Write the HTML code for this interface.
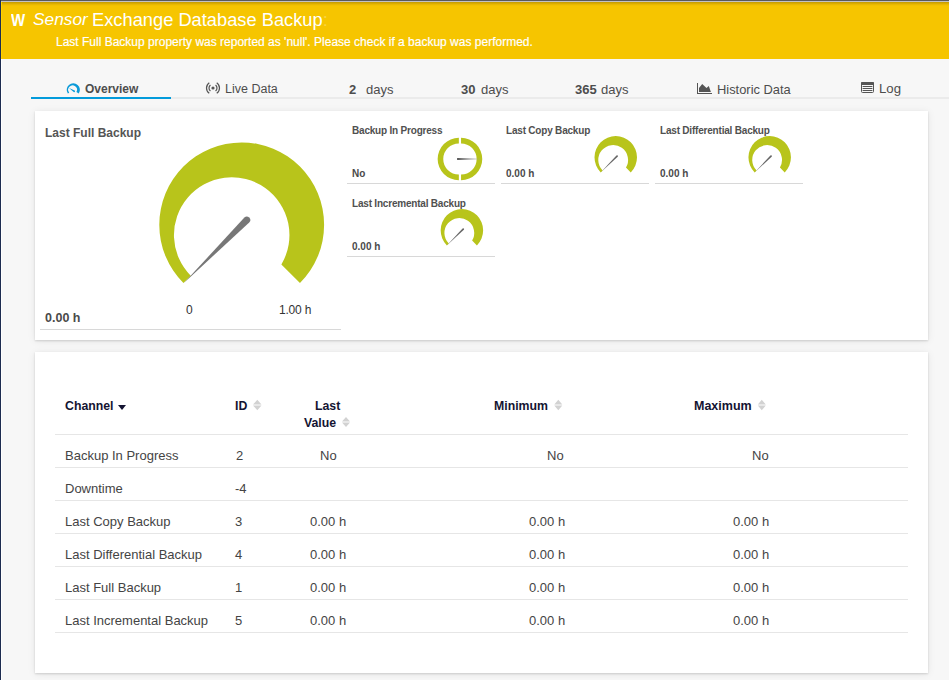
<!DOCTYPE html>
<html><head><meta charset="utf-8">
<style>
html,body{margin:0;padding:0;}
body{width:949px;height:680px;overflow:hidden;position:relative;background:#f7f7f7;font-family:"Liberation Sans",sans-serif;}
.a{position:absolute;white-space:nowrap;}
#topline{left:0;top:0;width:949px;height:1px;background:#5a5a5a;}
#topline2{left:1px;top:1px;width:948px;height:1px;background:#c2c2c4;}
#leftline{left:0;top:0;width:1px;height:680px;background:#1d2c50;}
#leftw{left:1px;top:59px;width:1px;height:621px;background:#fff;}
#hdr{left:1px;top:2px;width:948px;height:57px;background:#f6c500;}
#hdr:before{content:"";position:absolute;left:0;top:0;right:0;height:4px;background:linear-gradient(#c29a00,#d9ab00 35%,#ecbc00 70%,#f6c500);}
#hdrl{left:1px;top:2px;width:1px;height:57px;background:#ffd000;}
.wt{color:#fff;}
.tab{color:#4d4d4d;font-size:13px;}
.card{position:absolute;background:#fff;box-shadow:0 1px 2px rgba(0,0,0,.14),0 1px 8px rgba(0,0,0,.08);}
.gt{font-weight:bold;font-size:10px;color:#505050;letter-spacing:-0.2px;}
.gv{font-weight:bold;font-size:10px;color:#4a4a4a;}
.gl{height:1px;background:#d8d8d8;}
.th{font-weight:bold;font-size:12.3px;color:#141432;}
.td{font-size:13px;color:#444;}
.rl{left:55px;width:853px;height:1px;background:#e6e6e6;}
</style></head><body>
<div class="a" id="hdr"></div>
<div class="a" id="hdrl"></div>
<div class="a" id="topline"></div>
<div class="a" id="topline2"></div>
<div class="a" id="leftline"></div>
<div class="a" id="leftw"></div>

<!-- header text -->
<div class="a wt" style="left:11px;top:11px;font-weight:bold;font-size:15px;transform:scaleY(1.1);transform-origin:0 0;">W</div>
<div class="a wt" style="left:33px;top:9px;font-size:17.3px;font-style:italic;">Sensor</div>
<div class="a wt" style="left:92px;top:9px;font-size:18.3px;">Exchange Database Backup<span style="opacity:.25">:</span></div>
<div class="a wt" style="left:56px;top:35px;font-size:12px;-webkit-text-stroke:0.2px #fff;">Last Full Backup property was reported as 'null'. Please check if a backup was performed.</div>

<!-- tabs -->
<div class="a" style="left:31px;top:97px;width:918px;height:2px;background:#ebebeb;"></div>
<div class="a" style="left:31px;top:97px;width:140px;height:2px;background:#039bdb;"></div>
<svg class="a" style="left:62px;top:80px" width="22" height="16" viewBox="0 0 22 16">
  <path d="M5.83 13.59 A6.60 6.60 0 1 1 16.77 13.59 L14.45 12.03 A4.40 4.40 0 1 0 7.19 12.68 Z" fill="#0a9ad8"/>
  <path d="M7.00 7.90 L11.73 12.01 A0.85 0.85 0 0 0 12.67 10.59 Z" fill="#0a9ad8"/>
</svg>
<div class="a tab" style="left:85px;top:82px;font-weight:bold;font-size:12px;">Overview</div>
<svg class="a" style="left:204px;top:81px" width="18" height="14" viewBox="0 0 18 14">
  <circle cx="9" cy="7" r="1.6" fill="#555"/>
  <path d="M6.43 3.94 A4 4 0 0 0 6.43 10.06 M11.57 3.94 A4 4 0 0 1 11.57 10.06" fill="none" stroke="#555" stroke-width="1.2"/>
  <path d="M5.27 1.68 A6.5 6.5 0 0 0 5.27 12.32 M12.73 1.68 A6.5 6.5 0 0 1 12.73 12.32" fill="none" stroke="#555" stroke-width="1.2"/>
</svg>
<div class="a tab" style="left:225px;top:82px;font-size:12.5px;">Live Data</div>
<div class="a tab" style="left:349px;top:82px;font-weight:bold;">2</div>
<div class="a tab" style="left:366px;top:82px;">days</div>
<div class="a tab" style="left:461px;top:82px;font-weight:bold;">30</div>
<div class="a tab" style="left:481px;top:82px;">days</div>
<div class="a tab" style="left:575px;top:82px;font-weight:bold;">365</div>
<div class="a tab" style="left:601px;top:82px;">days</div>
<svg class="a" style="left:694px;top:80px" width="22" height="16" viewBox="0 0 22 16">
  <rect x="3" y="3" width="1" height="11" fill="#555"/>
  <rect x="3" y="13" width="15" height="1" fill="#555"/>
  <path d="M5 12 V8 L8.2 4 L12.5 8 L14.8 5.9 L16.9 12 Z" fill="#555"/>
</svg>
<div class="a tab" style="left:717px;top:82px;font-size:12.9px;">Historic Data</div>
<svg class="a" style="left:856px;top:79px" width="22" height="16" viewBox="0 0 22 16">
  <rect x="5.5" y="3.5" width="12" height="10" rx="1" fill="none" stroke="#555" stroke-width="1"/>
  <rect x="5" y="3" width="13" height="3" rx="0.8" fill="#555"/>
  <rect x="6.6" y="7" width="9.8" height="1" fill="#555"/>
  <rect x="6.6" y="9" width="9.8" height="1" fill="#555"/>
  <rect x="6.6" y="11" width="9.8" height="1" fill="#555"/>
</svg>
<div class="a tab" style="left:879px;top:81px;font-size:13.2px;">Log</div>

<!-- card 1 -->
<div class="card" style="left:35px;top:111px;width:893px;height:229px;"></div>
<div class="a" style="left:45px;top:126px;font-weight:bold;font-size:12px;color:#555;">Last Full Backup</div>
<div class="a" style="left:45px;top:311px;font-weight:bold;font-size:12.5px;color:#4a4a4a;">0.00 h</div>
<div class="a" style="left:186px;top:303px;font-size:12px;color:#333;">0</div>
<div class="a" style="left:279px;top:303px;font-size:12px;color:#333;letter-spacing:-0.2px;">1.00 h</div>
<div class="a gl" style="left:40px;top:329px;width:301px;"></div>

<div class="a gt" style="left:352px;top:125px;">Backup In Progress</div>
<div class="a gv" style="left:352px;top:168px;">No</div>
<div class="a gl" style="left:347px;top:183px;width:148px;"></div>
<div class="a gt" style="left:506px;top:125px;">Last Copy Backup</div>
<div class="a gv" style="left:506px;top:168px;">0.00 h</div>
<div class="a gl" style="left:501px;top:183px;width:148px;"></div>
<div class="a gt" style="left:660px;top:125px;">Last Differential Backup</div>
<div class="a gv" style="left:660px;top:168px;">0.00 h</div>
<div class="a gl" style="left:655px;top:183px;width:148px;"></div>
<div class="a gt" style="left:352px;top:198px;">Last Incremental Backup</div>
<div class="a gv" style="left:352px;top:241px;">0.00 h</div>
<div class="a gl" style="left:347px;top:256px;width:148px;"></div>

<svg class="a" style="left:0;top:0" width="949" height="680">
  <defs>
    <path id="gshape" d="M-58.27 58.27 A82.4 82.4 0 1 1 58.27 58.27 L39.67 39.67 A57.75 57.75 0 1 0 -50.94 50.94 Z"/>
    <path id="needle" d="M-57.80 58.20 L7.51 -2.40 A3.40 3.40 0 0 0 2.69 -7.20 Z"/>
    <linearGradient id="ng" x1="0" y1="0" x2="1" y2="0">
      <stop offset="0" stop-color="#505050"/><stop offset="1" stop-color="#b0b0b0"/>
    </linearGradient>
  </defs>
  <g transform="translate(241.7 224.8)">
    <use href="#gshape" fill="#b8c41b"/>
    <use href="#needle" fill="#777"/>
  </g>
  <g transform="translate(615.75 157.35) scale(0.2579)">
    <use href="#gshape" fill="#b8c41b"/>
    <use href="#needle" fill="#666"/>
  </g>
  <g transform="translate(769.7 157.35) scale(0.2579)">
    <use href="#gshape" fill="#b8c41b"/>
    <use href="#needle" fill="#666"/>
  </g>
  <g transform="translate(461.9 230.35) scale(0.2579)">
    <use href="#gshape" fill="#b8c41b"/>
    <use href="#needle" fill="#666"/>
  </g>
  <!-- donut -->
  <g transform="translate(459.95 159)">
    <path d="M-1.1 -21.2 A21.2 21.2 0 0 0 -1.1 21.2 L-1.1 15.6 A15.6 15.6 0 0 1 -1.1 -15.6 Z" fill="#b8c41b"/>
    <path d="M1.1 -21.2 A21.2 21.2 0 0 1 1.1 21.2 L1.1 15.6 A15.6 15.6 0 0 0 1.1 -15.6 Z" fill="#b8c41b"/>
    <path d="M-2.8 -0.9 L22.5 0 L-2.8 0.9 Z" fill="url(#ng)"/>
  </g>
</svg>

<!-- card 2 -->
<div class="card" style="left:35px;top:352px;width:893px;height:321px;"></div>
<div class="a th" style="left:65px;top:399px;">Channel</div>
<svg class="a" style="left:118px;top:405px" width="9" height="6"><path d="M0 0 H8 L4 5 Z" fill="#141432"/></svg>
<div class="a th" style="left:235px;top:399px;">ID</div>
<div class="a th" style="left:315px;top:399px;">Last</div>
<div class="a th" style="left:304px;top:416px;">Value</div>
<div class="a th" style="left:494px;top:399px;">Minimum</div>
<div class="a th" style="left:694px;top:399px;font-size:12.5px;">Maximum</div>
<svg class="a" style="left:0;top:0" width="949" height="680">
  <g fill="#d2d2d2">
    <path d="M253 404.5 L257.3 399.8 L261.5 404.5 Z M253 405.5 H261.5 L257.3 410.2 Z"/>
    <path d="M342 421.5 L346 416.9 L350 421.5 Z M342 422.5 H350 L346 427.1 Z"/>
    <path d="M554.3 404.5 L558.3 399.8 L562.3 404.5 Z M554.3 405.5 H562.3 L558.3 410.2 Z"/>
    <path d="M757.8 404.5 L761.8 399.8 L765.8 404.5 Z M757.8 405.5 H765.8 L761.8 410.2 Z"/>
  </g>
</svg>
<div class="a rl" style="top:434px;"></div>

<div class="a td" style="left:65px;top:448px;">Backup In Progress</div>
<div class="a td" style="left:236px;top:448px;">2</div>
<div class="a td" style="left:320px;top:448px;">No</div>
<div class="a td" style="left:547px;top:448px;">No</div>
<div class="a td" style="left:752px;top:448px;">No</div>
<div class="a rl" style="top:467px;"></div>

<div class="a td" style="left:65px;top:481px;">Downtime</div>
<div class="a td" style="left:235px;top:481px;">-4</div>
<div class="a rl" style="top:500px;"></div>

<div class="a td" style="left:65px;top:514px;">Last Copy Backup</div>
<div class="a td" style="left:235px;top:514px;">3</div>
<div class="a td" style="left:310px;top:514px;">0.00 h</div>
<div class="a td" style="left:529px;top:514px;">0.00 h</div>
<div class="a td" style="left:733px;top:514px;">0.00 h</div>
<div class="a rl" style="top:533px;"></div>

<div class="a td" style="left:65px;top:547px;">Last Differential Backup</div>
<div class="a td" style="left:235px;top:547px;">4</div>
<div class="a td" style="left:310px;top:547px;">0.00 h</div>
<div class="a td" style="left:529px;top:547px;">0.00 h</div>
<div class="a td" style="left:733px;top:547px;">0.00 h</div>
<div class="a rl" style="top:566px;"></div>

<div class="a td" style="left:65px;top:580px;">Last Full Backup</div>
<div class="a td" style="left:235px;top:580px;">1</div>
<div class="a td" style="left:310px;top:580px;">0.00 h</div>
<div class="a td" style="left:529px;top:580px;">0.00 h</div>
<div class="a td" style="left:733px;top:580px;">0.00 h</div>
<div class="a rl" style="top:599px;"></div>

<div class="a td" style="left:65px;top:613px;">Last Incremental Backup</div>
<div class="a td" style="left:235px;top:613px;">5</div>
<div class="a td" style="left:310px;top:613px;">0.00 h</div>
<div class="a td" style="left:529px;top:613px;">0.00 h</div>
<div class="a td" style="left:733px;top:613px;">0.00 h</div>
<div class="a rl" style="top:632px;"></div>
</body></html>
